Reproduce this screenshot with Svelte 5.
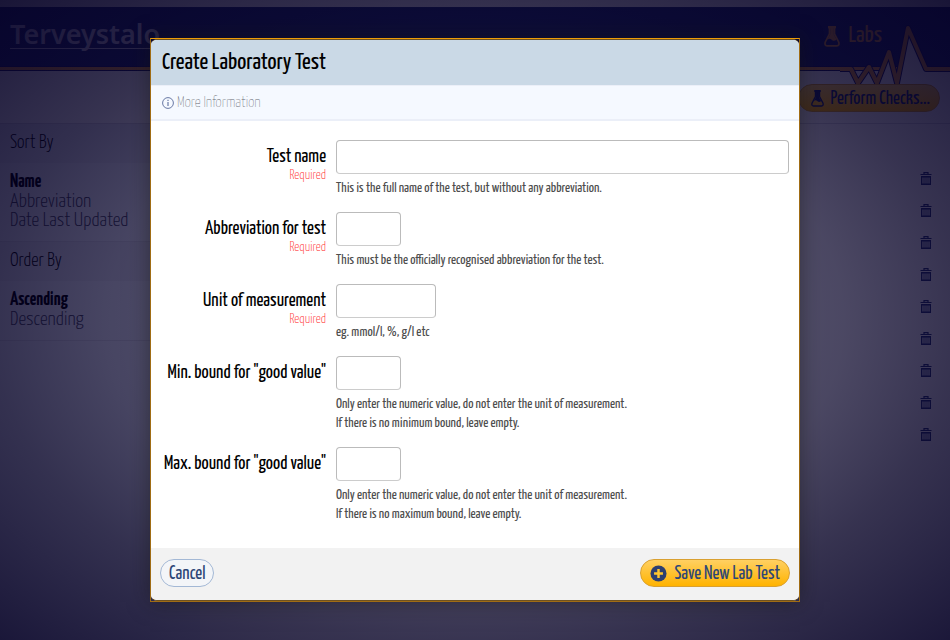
<script>
  const fields = [
    { id: 'name', label: 'Test name', required: true, size: 'full', help: ['This is the full name of the test, but without any abbreviation.'] },
    { id: 'abbr', label: 'Abbreviation for test', required: true, size: 'small', help: ['This must be the officially recognised abbreviation for the test.'] },
    { id: 'unit', label: 'Unit of measurement', required: true, size: 'medium', help: ['eg. mmol/l, %, g/l etc'] },
    { id: 'min', label: 'Min. bound for "good value"', required: false, size: 'small', help: ['Only enter the numeric value, do not enter the unit of measurement.', 'If there is no minimum bound, leave empty.'] },
    { id: 'max', label: 'Max. bound for "good value"', required: false, size: 'small', help: ['Only enter the numeric value, do not enter the unit of measurement.', 'If there is no maximum bound, leave empty.'] }
  ];
  const groups = [
    { title: 'Sort By', items: ['Name', 'Abbreviation', 'Date Last Updated'] },
    { title: 'Order By', items: ['Ascending', 'Descending'] }
  ];
  const rows = [1, 2, 3, 4, 5, 6, 7, 8, 9];
</script>

{#snippet flask()}
  <svg class="flask" viewBox="0 0 16 21" aria-hidden="true">
    <path d="M4 1.200h8" stroke="currentColor" stroke-width="2.400" />
    <path d="M5.500 1v7L1.200 16.200Q.4 19.800 3 19.800h10Q15.600 19.800 14.800 16.200L10.500 8V1" fill="none" stroke="currentColor" stroke-width="1.700" />
    <path d="M6.200 2h3.600v6.500l2.700 5q-2.300 2.400-4.500.4t-4.500-.4l2.700-5z" fill="currentColor" />
  </svg>
{/snippet}

<div class="page">
  <div class="strip"></div>
  <header class="top">
    <a class="logo" href="#home">Terveystalo</a>
    <a class="labs" href="#labs">{@render flask()}Labs</a>
    <svg class="pulse" viewBox="0 0 110 66" aria-hidden="true">
      <path d="M0 46h11L18 60 29 44 37 60 49 29 57 60 68 5 86 46h24v20H0z" fill="#f3f0fc" />
      <path d="M0 46h11L18 60 29 44 37 60 49 29 57 60 68 5 86 46h24" fill="none" stroke="#20206c" stroke-width="6" stroke-linejoin="round" />
      <path d="M0 46h11L18 60 29 44 37 60 49 29 57 60 68 5 86 46h24" fill="none" stroke="#e09848" stroke-width="4" stroke-linejoin="round" />
    </svg>
  </header>
  <div class="toolbar"><button class="pill gold checks" type="button">{@render flask()}<span>Perform Checks...</span></button></div>
  <div class="body">
    <nav>
      {#each groups as group}
        <h2>{group.title}</h2>
        <ul>
          {#each group.items as item, i}
            <li><a href="#sort" class:active={i === 0}>{item}</a></li>
          {/each}
        </ul>
      {/each}
    </nav>
    <main>
      {#each rows as row}
        <button class="trash" type="button" aria-label="Delete test {row}">
          <svg viewBox="0 0 12 14" aria-hidden="true">
            <path d="M.5 2.500h11M4 2V.7h4V2" fill="none" stroke="currentColor" stroke-width="1.200" />
            <path d="M1.700 4.700h8.600v7.600H1.700z" fill="none" stroke="currentColor" stroke-width="1.400" />
            <path d="M4 5v7M6 5v7M8 5v7" stroke="currentColor" stroke-width=".9" />
          </svg>
        </button>
      {/each}
    </main>
  </div>
</div>

<div class="overlay">
  <div class="frame">
    <form class="dialog" role="dialog" aria-labelledby="title">
      <h1 id="title">Create Laboratory Test</h1>
      <a class="info" href="#info">
        <svg viewBox="0 0 12 12" aria-hidden="true">
          <circle cx="6" cy="6" r="5.400" fill="none" stroke="#6878a4" stroke-width="1" />
          <path d="M6 5v4M6 2.700v1.300" stroke="#6878a4" stroke-width="1.200" />
        </svg>
        <span>More Information</span>
      </a>
      <div class="fields">
        {#each fields as f}
          <div class="row">
            <label for={f.id}>{f.label}{#if f.required}<small>Required</small>{/if}</label>
            <div class="control">
              <input id={f.id} class={f.size} type="text" />
              {#each f.help as line}<p>{line}</p>{/each}
            </div>
          </div>
        {/each}
      </div>
      <footer>
        <button class="pill cancel" type="button"><span>Cancel</span></button>
        <button class="pill gold save" type="button">
          <svg viewBox="0 0 18 18" aria-hidden="true">
            <circle cx="9" cy="9" r="8.500" fill="#2d3f70" />
            <path d="M9 4.300v9.400M4.300 9h9.400" stroke="#ffc62e" stroke-width="2.600" />
          </svg>
          <span>Save New Lab Test</span>
        </button>
      </footer>
    </form>
  </div>
</div>

<style>
  :global(body) {
    margin: 0;
    overflow: hidden;
  }
  .page, .overlay {
    font-family: 'Yanone Kaffeesatz', 'Open Sans Condensed', 'Roboto Condensed', 'Liberation Sans Narrow', 'Liberation Sans', sans-serif;
    box-sizing: border-box;
  }
  a { text-decoration: none; }
  button { font-family: inherit; cursor: pointer; }
  h1, h2, p, ul { margin: 0; padding: 0; font-weight: 400; }
  .page {
    isolation: isolate;
    display: flex;
    flex-direction: column;
    min-height: 100vh;
    background: #f3f0fc;
  }
  .strip { height: 7px; background: #d8d4e4; }
  .top {
    position: relative;
    display: flex;
    justify-content: space-between;
    height: 60px;
    box-sizing: border-box;
    padding: 12px 68px 0 10px;
    background: #263078;
    border-bottom: 1px solid #20206c;
    box-shadow: 0 3px #e09848, 0 4px #20206c;
  }
  .logo {
    height: 29px;
    border-bottom: 1px solid #c4c0e0;
    color: #c4c0e0;
    font: 600 27px/30px 'Noto Sans', sans-serif;
  }
  .labs {
    position: relative;
    z-index: 1;
    display: flex;
    align-items: center;
    gap: 8px;
    height: 34px;
    color: #e09848;
    font-size: 24px;
  }
  .labs .flask { width: 16px; height: 21px; }
  .pulse {
    position: absolute;
    right: 0;
    top: 16px;
    width: 110px;
    height: 66px;
  }
  .toolbar {
    display: flex;
    justify-content: flex-end;
    height: 57px;
    box-sizing: border-box;
    padding: 17px 10px 0 0;
    border-bottom: 1px solid #cfcce0;
  }
  .pill {
    display: flex;
    align-items: center;
    height: 28px;
    border-radius: 14px;
    color: #2d4676;
    font-size: 19px;
    line-height: 24px;
    white-space: nowrap;
  }
  .pill span { padding-top: 2px; }
  .gold {
    gap: 7px;
    padding: 0 9px;
    border: 1px solid #d9a030;
    background: linear-gradient(#ffd062, #ffb300);
  }
  .checks { z-index: 1; padding-left: 12px; color: #202c78; }
  .checks .flask { width: 13px; height: 17px; }
  .body { display: flex; flex: 1; }
  nav { width: 200px; background: #e6e8fa; color: #000; }
  nav h2 {
    height: 39px;
    background: #dedff2;
    font-size: 19px;
    font-weight: 300;
    line-height: 38px;
    padding-left: 10px;
  }
  nav ul {
    list-style: none;
    padding: 9px 10px 11px;
    border-bottom: 1px solid #d4d4e8;
    font-size: 20px;
    line-height: 19px;
  }
  nav a { color: #44445e; font-weight: 300; }
  nav .active { color: #000; font-size: 19px; font-weight: 700; }
  main {
    flex: 1;
    display: flex;
    flex-direction: column;
    align-items: flex-end;
    padding: 39px 14px 0;
  }
  .trash {
    width: 20px;
    height: 32px;
    padding: 0 4px;
    border: 0;
    background: none;
    color: #2c3880;
  }
  .trash svg { display: block; width: 12px; height: 14px; }
  .overlay {
    position: absolute;
    inset: 0;
    padding: 38px 150px;
    background: radial-gradient(ellipse farthest-corner at center, rgba(4, 0, 34, .55), rgba(4, 0, 34, .7) 55%, rgba(4, 0, 34, .79) 72%, rgba(4, 0, 36, .9));
  }
  .frame {
    border: 1px solid #a06c14;
    border-top-color: #ec9c08;
    box-shadow: 0 0 20px rgba(20, 20, 20, .5);
  }
  .dialog {
    border: 1px solid #6f5220;
    border-width: 1px 0;
    border-radius: 6px;
    background: #fff;
    overflow: hidden;
  }
  h1 {
    height: 45px;
    box-sizing: border-box;
    padding-left: 11px;
    background: #cad9e6;
    font-size: 24px;
    line-height: 46px;
  }
  .info {
    display: flex;
    align-items: center;
    gap: 3px;
    height: 36px;
    box-sizing: border-box;
    padding-left: 11px;
    border: solid #ebeff8;
    border-width: 1px 0 2px;
    background: #f5f9ff;
    color: #63666e;
    font-size: 15px;
    font-weight: 200;
  }
  .info span { padding-top: 2px; }
  .info svg { width: 12px; height: 12px; }
  .fields {
    display: flex;
    flex-direction: column;
    gap: 14px;
    padding: 19px 10px 24px;
  }
  .row { display: flex; gap: 10px; }
  label {
    width: 165px;
    padding-top: 8px;
    text-align: right;
    white-space: nowrap;
    font-size: 19px;
    line-height: 19px;
  }
  small {
    display: block;
    color: #ff4848;
    font-size: 13px;
    font-weight: 300;
    line-height: 18px;
  }
  .control { flex: 1; }
  input {
    display: block;
    height: 34px;
    box-sizing: border-box;
    margin-bottom: 5px;
    border: 1px solid #bbb;
    border-bottom-color: #ccc;
    border-radius: 4px;
    background: #fff;
  }
  .full { width: 100%; }
  .small { width: 65px; }
  .medium { width: 100px; }
  p {
    color: #4d4d4d;
    font-size: 14px;
    line-height: 19px;
  }
  footer {
    display: flex;
    justify-content: space-between;
    padding: 11px 9px 13px;
    background: #f2f2f2;
  }
  .cancel { padding: 0 8px; border: 1px solid #a3b8d5; background: #f3f5f8; }
  .save svg { width: 17px; height: 17px; }
</style>
